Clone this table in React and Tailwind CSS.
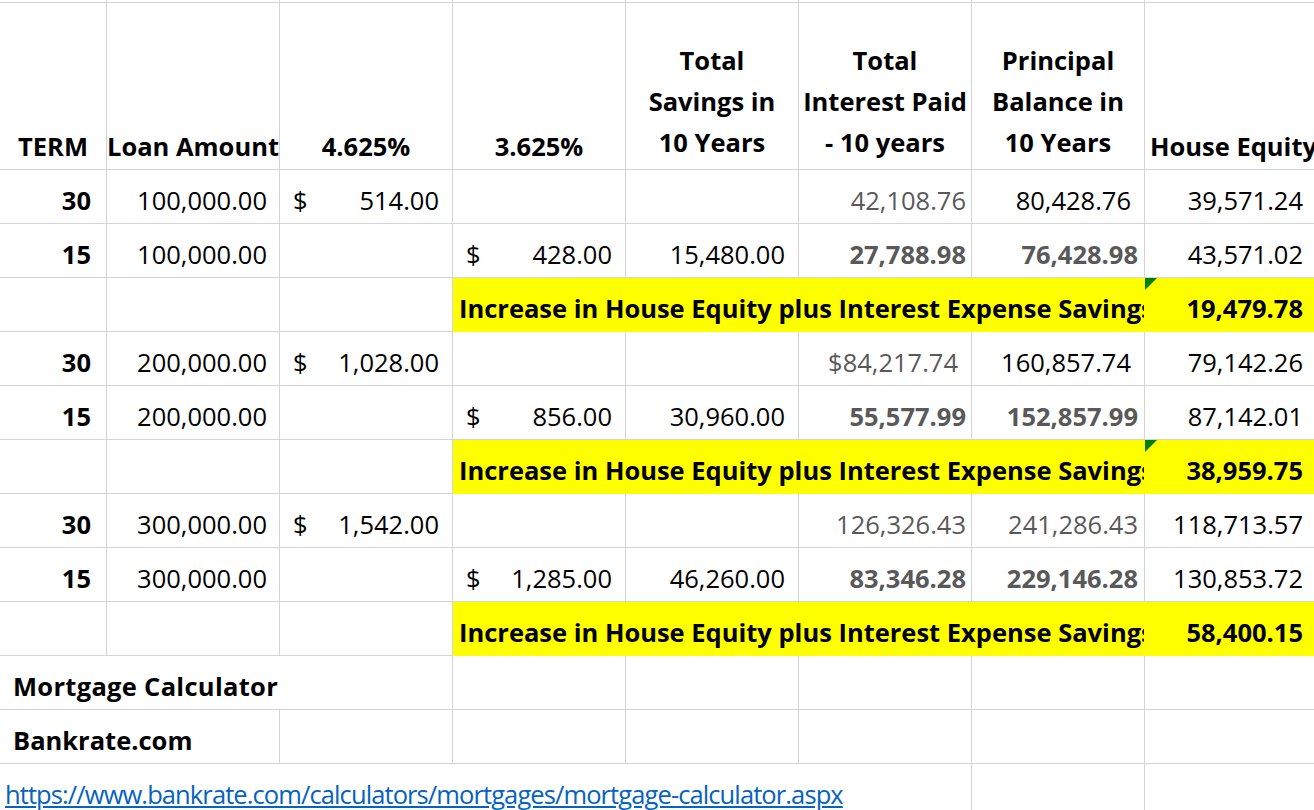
const line = 'border-[#d4d4d4]'
const yellow = 'bg-[#ffff00] border-[#ffff00]'

function Cell({ hl, cls = '', children }) {
  return (
    <div className={`flex items-end pb-2 leading-[30px] border-r border-b whitespace-nowrap overflow-hidden ${hl ? yellow : line} ${cls}`}>
      {children}
    </div>
  )
}

function Money({ v }) {
  return (
    <Cell cls="justify-between px-[13px]">
      <span>$</span>
      <span>{v}</span>
    </Cell>
  )
}

function Head({ lines }) {
  return (
    <div className={`flex flex-col justify-end items-center pb-[6px] leading-[41px] font-bold border-r border-b ${line}`}>
      {lines.map(l => <div key={l} className="whitespace-nowrap">{l}</div>)}
    </div>
  )
}

function SavingsRow({ total, flag }) {
  return (
    <>
      <Cell />
      <Cell />
      <Cell />
      <Cell hl cls="col-span-4 pl-[6px] font-bold">
        Increase in House Equity plus Interest Expense Savings
      </Cell>
      <Cell hl cls="relative justify-end pr-[14px] font-bold">
        {flag && (
          <span className="absolute top-0 left-0 w-0 h-0 border-t-[12px] border-t-[#008000] border-r-[12px] border-r-transparent" />
        )}
        {total}
      </Cell>
    </>
  )
}

export default function App() {
  return (
    <div className="w-[1314px] h-[810px] overflow-hidden bg-white text-black text-[25.5px] font-['Open_Sans','Noto_Sans',sans-serif]">
      <div className="grid grid-cols-[107px_repeat(7,173px)] grid-rows-[3px_167px] auto-rows-[54px] w-[1318px]">
        {/* sliver of the row above */}
        {Array.from({ length: 8 }).map((_, i) => (
          <div key={i} className={`border-r border-b ${line}`} />
        ))}

        {/* header */}
        <Cell cls="justify-center font-bold">TERM</Cell>
        <Cell cls="justify-center font-bold">Loan Amount</Cell>
        <Cell cls="justify-center font-bold">4.625%</Cell>
        <Cell cls="justify-center font-bold">3.625%</Cell>
        <Head lines={['Total', 'Savings in', '10 Years']} />
        <Head lines={['Total', 'Interest Paid', '- 10 years']} />
        <Head lines={['Principal', 'Balance in', '10 Years']} />
        <Cell cls="pl-[5px] font-bold">House Equity</Cell>

        {/* 100k */}
        <Cell cls="justify-end pr-[15px] font-bold">30</Cell>
        <Cell cls="justify-end pr-[12px]">100,000.00</Cell>
        <Money v="514.00" />
        <Cell />
        <Cell />
        <Cell cls="justify-end pr-[5px] text-[#595959]">42,108.76</Cell>
        <Cell cls="justify-end pr-[13px]">80,428.76</Cell>
        <Cell cls="justify-end pr-[14px]">39,571.24</Cell>

        <Cell cls="justify-end pr-[15px] font-bold">15</Cell>
        <Cell cls="justify-end pr-[12px]">100,000.00</Cell>
        <Cell />
        <Money v="428.00" />
        <Cell cls="justify-end pr-[13px]">15,480.00</Cell>
        <Cell cls="justify-end pr-[5px] font-bold text-[#595959]">27,788.98</Cell>
        <Cell cls="justify-end pr-[6px] font-bold text-[#595959]">76,428.98</Cell>
        <Cell cls="justify-end pr-[14px]">43,571.02</Cell>

        <SavingsRow total="19,479.78" flag />

        {/* 200k */}
        <Cell cls="justify-end pr-[15px] font-bold">30</Cell>
        <Cell cls="justify-end pr-[12px]">200,000.00</Cell>
        <Money v="1,028.00" />
        <Cell />
        <Cell />
        <Cell cls="justify-end pr-[13px] text-[#595959]">$84,217.74</Cell>
        <Cell cls="justify-end pr-[13px]">160,857.74</Cell>
        <Cell cls="justify-end pr-[14px]">79,142.26</Cell>

        <Cell cls="justify-end pr-[15px] font-bold">15</Cell>
        <Cell cls="justify-end pr-[12px]">200,000.00</Cell>
        <Cell />
        <Money v="856.00" />
        <Cell cls="justify-end pr-[13px]">30,960.00</Cell>
        <Cell cls="justify-end pr-[5px] font-bold text-[#595959]">55,577.99</Cell>
        <Cell cls="justify-end pr-[6px] font-bold text-[#595959]">152,857.99</Cell>
        <Cell cls="justify-end pr-[14px]">87,142.01</Cell>

        <SavingsRow total="38,959.75" flag />

        {/* 300k */}
        <Cell cls="justify-end pr-[15px] font-bold">30</Cell>
        <Cell cls="justify-end pr-[12px]">300,000.00</Cell>
        <Money v="1,542.00" />
        <Cell />
        <Cell />
        <Cell cls="justify-end pr-[5px] text-[#595959]">126,326.43</Cell>
        <Cell cls="justify-end pr-[6px] text-[#595959]">241,286.43</Cell>
        <Cell cls="justify-end pr-[14px]">118,713.57</Cell>

        <Cell cls="justify-end pr-[15px] font-bold">15</Cell>
        <Cell cls="justify-end pr-[12px]">300,000.00</Cell>
        <Cell />
        <Money v="1,285.00" />
        <Cell cls="justify-end pr-[13px]">46,260.00</Cell>
        <Cell cls="justify-end pr-[5px] font-bold text-[#595959]">83,346.28</Cell>
        <Cell cls="justify-end pr-[6px] font-bold text-[#595959]">229,146.28</Cell>
        <Cell cls="justify-end pr-[14px]">130,853.72</Cell>

        <SavingsRow total="58,400.15" />

        {/* sources */}
        <Cell cls="col-span-3 pl-[13px] font-bold tracking-[0.3px]">Mortgage Calculator</Cell>
        <Cell />
        <Cell />
        <Cell />
        <Cell />
        <Cell />

        <Cell cls="col-span-2 pl-[13px] font-bold">Bankrate.com</Cell>
        <Cell />
        <Cell />
        <Cell />
        <Cell />
        <Cell />
        <Cell />

        <Cell cls="col-span-6 pl-[5px] text-[#0563c1] underline tracking-[-0.9px]">
          https://www.bankrate.com/calculators/mortgages/mortgage-calculator.aspx
        </Cell>
        <Cell />
        <Cell />
      </div>
    </div>
  )
}
